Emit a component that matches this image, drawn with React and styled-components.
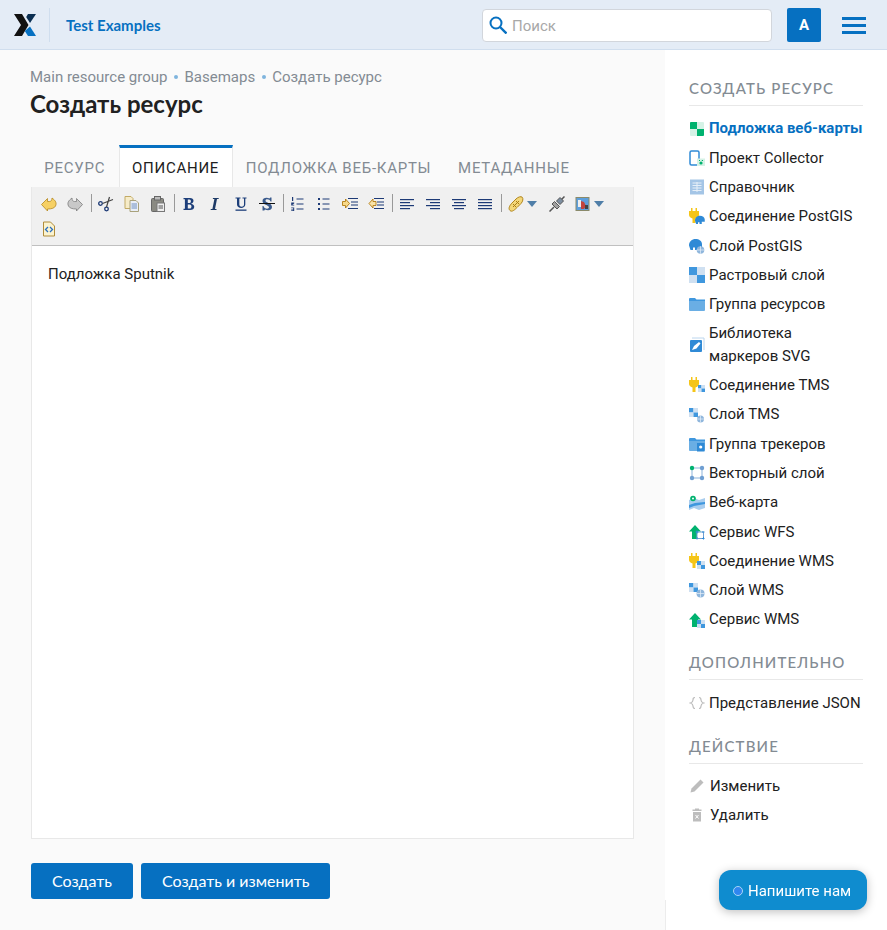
import React from "react";
import styled, { createGlobalStyle } from "styled-components";

const GlobalStyle = createGlobalStyle`
  html, body {
    margin: 0;
    padding: 0;
    background: #fff;
    font-family: Roboto, "Liberation Sans", sans-serif;
    color: #212121;
  }
  * { box-sizing: border-box; }
`;

const Page = styled.div`
  width: 887px;
  height: 930px;
  overflow: hidden;
  display: flex;
  flex-direction: column;
`;

const Header = styled.header`
  height: 50px;
  flex: none;
  display: flex;
  align-items: center;
  background: #e4ecf6;
  border-bottom: 1px solid #d0deee;
  padding: 1px 21px 0 14px;
`;

const LogoBox = styled.div`
  display: flex;
  align-items: center;
  height: 34px;
  padding-right: 13px;
  border-right: 1px solid #d0deee;
`;

const SiteName = styled.div`
  margin-left: 16px;
  font-family: Lato, Roboto, sans-serif;
  font-weight: 700;
  font-size: 15px;
  color: #0670c1;
`;

const Search = styled.div`
  margin-left: auto;
  width: 290px;
  height: 33px;
  display: flex;
  align-items: center;
  gap: 5px;
  padding: 0 6px;
  background: #fff;
  border: 1px solid #d2d6dc;
  border-radius: 4px;
  font-size: 15px;
  color: #a8a8a8;
`;

const SearchText = styled.span`
  padding-top: 2px;
`;

const Avatar = styled.div`
  margin-left: 15px;
  width: 34px;
  height: 34px;
  display: flex;
  align-items: center;
  justify-content: center;
  background: #0670c1;
  border-radius: 2px;
  color: #fff;
  font-weight: 700;
  font-size: 15px;
`;

const Burger = styled.div`
  margin-left: 21px;
  width: 24px;
  display: flex;
  flex-direction: column;
  gap: 4px;

  span {
    display: block;
    height: 3px;
    background: #0670c1;
  }
`;

const Body = styled.div`
  flex: 1;
  min-height: 0;
  display: flex;
`;

const Main = styled.main`
  width: 665px;
  flex: none;
  background: #fafafa;
  padding: 18px 31px 0 30px;
`;

const Crumbs = styled.div`
  display: flex;
  align-items: center;
  height: 18px;
  font-size: 15px;
  color: #838b93;
`;

const Dot = styled.span`
  width: 4px;
  height: 4px;
  margin: 0 6.5px;
  border-radius: 50%;
  background: #7fb4dd;
`;

const Title = styled.h1`
  margin: 3px 0 0;
  font-family: Lato, Roboto, sans-serif;
  font-weight: 700;
  font-size: 24px;
  line-height: 29px;
  color: #212121;
`;

const Tabs = styled.div`
  display: flex;
  margin: 27px 0 0 1px;
  height: 42px;
`;

const Tab = styled.div`
  display: flex;
  align-items: center;
  padding: 0 12.35px;
  font-size: 15px;
  letter-spacing: 0.75px;
  text-transform: uppercase;
  color: ${(p) => (p.$active ? "#212121" : "#838b93")};
  background: ${(p) => (p.$active ? "#fff" : "transparent")};
  border-top: ${(p) => (p.$active ? "3px solid #0670c1" : "3px solid transparent")};
  border-left: 1px solid ${(p) => (p.$active ? "#e8e8e8" : "transparent")};
  border-right: 1px solid ${(p) => (p.$active ? "#e8e8e8" : "transparent")};
`;

const Editor = styled.div`
  margin-left: 1px;
  height: 652px;
  background: #fff;
  border: 1px solid #e8e8e8;
  border-top: none;
  display: flex;
  flex-direction: column;
`;

const Toolbar = styled.div`
  height: 59px;
  flex: none;
  display: flex;
  flex-wrap: wrap;
  align-content: flex-start;
  padding: 4px 0 0 4px;
  background: #f0f0f0;
  border-bottom: 1px solid #c0c0c0;
`;

const Tool = styled.span`
  width: ${(p) => (p.$caret ? 41 : 26)}px;
  height: 25px;
  padding-left: 5px;
  display: flex;
  align-items: center;
`;

const Sep = styled.span`
  width: 1px;
  height: 18px;
  margin: 3px 1px 3px 3px;
  background: #999;
`;

const EditorText = styled.div`
  padding: 18px 16px;
  font-size: 15px;
  line-height: 20px;
`;

const Actions = styled.div`
  margin: 24px 0 0 1px;
  display: flex;
  gap: 8px;
`;

const Button = styled.button`
  height: 36px;
  padding: 0 21px 2px;
  border: none;
  border-radius: 3px;
  background: #0670c1;
  color: #fff;
  font-family: Lato, Roboto, sans-serif;
  font-size: 16px;
`;

const Side = styled.aside`
  position: relative;
  flex: 1;
  padding: 29px 24px 0;

  &::after {
    content: "";
    position: absolute;
    left: 0;
    top: 850px;
    bottom: 0;
    width: 1px;
    background: #ececec;
  }
`;

const SideTitle = styled.h3`
  margin: ${(p) => p.$top || 0}px 0 8px;
  padding-bottom: 8px;
  border-bottom: 1px solid #e8e8e8;
  font-family: Lato, Roboto, sans-serif;
  font-weight: 500;
  font-size: 15px;
  line-height: 18px;
  letter-spacing: 1.15px;
  text-transform: uppercase;
  color: #838b93;
`;

const SideItem = styled.div`
  display: flex;
  align-items: center;
  gap: ${(p) => (p.$wide ? 5 : 4)}px;
  padding: 3.4px 0;
  font-size: 15px;
  line-height: 22.5px;
  font-weight: ${(p) => (p.$active ? 700 : 400)};
  color: ${(p) => (p.$active ? "#0670c1" : "#212121")};

  svg {
    flex: none;
  }
`;

const ChatButton = styled.div`
  position: fixed;
  left: 719px;
  top: 870px;
  width: 148px;
  height: 40px;
  display: flex;
  align-items: center;
  gap: 5px;
  padding: 1px 0 0 14px;
  background: #0f8ccf;
  border-radius: 12px;
  box-shadow: 0 2px 10px rgba(0, 0, 0, 0.25);
  color: #fff;
  font-size: 15px;
`;

const ChatDot = styled.span`
  width: 10px;
  height: 10px;
  border-radius: 50%;
  background: #2f86f0;
  border: 1px solid #a9d6f5;
`;

const Logo = () => (
  <svg width="22" height="22" viewBox="0 0 22 22">
    <path d="M0 0h8l6.500 11L8 22H0l7-11z" fill="#111" />
    <path d="M14 0h8l-6 9-3.800-6z" fill="#0b2f52" />
    <path d="M16 12.500L22 22h-8l-3.200-5z" fill="#0670c1" />
  </svg>
);

const SearchIcon = () => (
  <svg width="18" height="18" viewBox="0 0 18 18" fill="none" stroke="#0670c1" strokeWidth="2">
    <circle cx="7" cy="7" r="5.500" />
    <path d="M11 11l6.500 6.500" strokeWidth="2.400" />
  </svg>
);

const I = ({ children }) => (
  <svg width="16" height="16" viewBox="0 0 16 16">
    {children}
  </svg>
);

const navy = "#1d3a76";

const Lines = ({ rows }) => (
  <I>
    {rows.map(([a, b], i) => (
      <rect key={i} x={a} y={3 + i * 3} width={b} height="1.200" fill={navy} />
    ))}
  </I>
);

const tools = {
  undo: (
    <I>
      <path d="M.5 8.500l6-6v3h2c1.500 0 2.500-1.200 2.500-3.500 3.500 2.500 5 5 3.500 8-1 2-3.500 3-8 3V15z" fill="#f6d064" stroke="#b5881e" strokeWidth="0.800" />
    </I>
  ),
  redo: (
    <I>
      <path d="M15.500 8.500l-6-6v3h-2C6 5.500 5 4.300 5 2 1.500 4.500 0 7 1.500 10c1 2 3.500 3 8 3V15z" fill="#c8c8c8" stroke="#7c7c7c" strokeWidth="0.800" />
    </I>
  ),
  cut: (
    <I>
      <g fill="none" stroke={navy} strokeWidth="1.300">
        <circle cx="2.500" cy="7.500" r="1.800" />
        <circle cx="8.500" cy="13" r="1.800" />
      </g>
      <path d="M4.500 7.500L15 3.500M8.500 11L11.500 1" stroke="#444" strokeWidth="1.200" />
    </I>
  ),
  copy: (
    <I>
      <path d="M1 .5h6l2 2v10H1z" fill="#f6ecc9" stroke="#c2aa66" />
      <path d="M6 4.500h6l2.500 2.500v8.500H6z" fill="#e9eef7" stroke="#a9a27c" />
      <path d="M7.500 8h5.500M7.500 10h5.500M7.500 12h5.500" stroke="#6f8fc0" />
    </I>
  ),
  paste: (
    <I>
      <rect x="1.500" y="2.500" width="12" height="13" rx="1" fill="#8a8a82" stroke="#666" />
      <rect x="4.500" y=".5" width="6" height="3.500" fill="#bbb" stroke="#666" />
      <rect x="7" y="7" width="7.500" height="8.500" fill="#eee" stroke="#777" />
      <path d="M8.500 10h4.500M8.500 12h4.500" stroke="#555" />
    </I>
  ),
  b: (
    <I>
      <path d="M2.500 2h6.500c4.500 0 4.500 5 1 5.700 4.500.6 4.500 6.300-1 6.300H2.500v-1.200h1.400V3.200H2.500zM6.800 3.400v3.700h1.700c1.900 0 1.900-3.700 0-3.700zM6.800 8.400v4.200h1.900c2.400 0 2.400-4.200 0-4.200z" fill="#1d3f7a" />
    </I>
  ),
  i: (
    <I>
      <path d="M6 2h5.800l-.2 1.100h-1.600L8 12.900h1.600l-.2 1.100H3.600l.2-1.100h1.600L7.400 3.100H5.800z" fill="#1d3a66" />
    </I>
  ),
  u: (
    <I>
      <path d="M2.500 1.500H7.500v1.100H6.300V8.500c0 3 4.700 3 4.700 0V2.600H9.500V1.500H13.500v1.100h-1.200V8.500c0 4.600-8.300 4.600-8.300 0V2.600H2.500z" fill="#1d3f7a" />
      <rect x="2.500" y="13.500" width="11" height="1.300" fill="#1d3f7a" />
    </I>
  ),
  s: (
    <I>
      <path d="M12.500 1.500v4h-1c-.5-2.500-5-3-5-.8 0 2.300 6.500 2 6.500 6.300 0 3.500-4.500 4-7 2.500l-.7 1H3.500v-4.500h1c.5 3 5.500 3.500 5.500 1.300 0-2.300-6.500-2.300-6.500-6.300C3.500 1.500 8 1 10.500 2.500l.7-1z" fill="#3a5a8c" />
      <rect x="0" y="7" width="16" height="1" fill="#111" />
    </I>
  ),
  ol: (
    <I>
      <path d="M6.500 3h7M6.500 8h7M6.500 13h7" stroke={navy} strokeWidth="1.200" />
      <path d="M2 1h1.200v4H2zM1.200 6.500h3v1l-2 1.200h2v.8h-3zM1.200 11.500h3V15h-3v-.8h2v-.6h-2v-.5h2v-.8h-2z" fill={navy} />
    </I>
  ),
  ul: (
    <I>
      <path d="M6.500 3h7M6.500 8h7M6.500 13h7" stroke={navy} strokeWidth="1.200" />
      <path d="M2 2h2v2H2zM2 7h2v2H2zM2 12h2v2H2z" fill={navy} />
    </I>
  ),
  indent: (
    <I>
      <path d="M6 2.500h10M9 6h7M9 9h7M6 12.500h10" stroke={navy} strokeWidth="1.100" />
      <path d="M.5 5.500h3V3l4 4.500-4 4.500V9.500h-3z" fill="#f7d98a" stroke="#b37a10" strokeWidth="0.900" />
    </I>
  ),
  outdent: (
    <I>
      <path d="M6 2.500h10M9 6h7M9 9h7M6 12.500h10" stroke={navy} strokeWidth="1.100" />
      <path d="M8 5.500H5V3L1 7.500 5 12V9.500h3z" fill="#f7e2a8" stroke="#b37a10" strokeWidth="0.900" />
    </I>
  ),
  left: <Lines rows={[[1, 14], [1, 10], [1, 14], [1, 10]]} />,
  right: <Lines rows={[[1, 14], [5, 10], [1, 14], [5, 10]]} />,
  center: <Lines rows={[[1, 14], [3, 10], [1, 14], [3, 10]]} />,
  justify: <Lines rows={[[1, 14], [1, 14], [1, 14], [1, 14]]} />,
  link: (
    <I>
      <path d="M2 14.500c-2.200-2 0-5.500 2-7.500l4-4c2-2 5-3 6.200-1.800 1.200 1.300.8 4.300-1.200 6.300l-4 4c-2 2-5 5-7 3z" fill="#f3d77a" stroke="#b0851c" />
      <path d="M5 11l6-6M8 5l3 3M5 8l3 3" stroke="#a87c14" />
    </I>
  ),
  unlink: (
    <I>
      <path d="M.5 15.500l4.500-4.500M15.500.5l-3 3" stroke="#555" strokeWidth="1.500" />
      <path d="M3 8l5 5 2.500-2.500-5-5z" fill="#a0a0a0" stroke="#555" />
      <path d="M7.500 5l3.500 3.500 3.500-3.500L11 1.500z" fill="#7c8ea0" stroke="#555" />
    </I>
  ),
  image: (
    <I>
      <rect x="1" y="1.500" width="13" height="13" fill="#5d9fdc" stroke="#8a8a6a" />
      <path d="M3 4h3v7H3z" fill="#eee" />
      <path d="M6 5l3 1 2 4-2 3H6z" fill="#c2443c" />
      <path d="M10 9h3v4h-3z" fill="#444" />
    </I>
  ),
  source: (
    <I>
      <path d="M2.500 1h7l4 4v10h-11z" fill="#fbf3cf" stroke="#b08c3a" />
      <path d="M7 6L4.500 8.500 7 11M9 6l2.500 2.500L9 11" fill="none" stroke="#2a6fc0" strokeWidth="1.300" />
    </I>
  ),
};

const Caret = () => (
  <svg width="10" height="6" viewBox="0 0 10 6" style={{ marginLeft: 3 }}>
    <path d="M0 0h10L5 6z" fill="#4f7ea8" />
  </svg>
);

const blue = "#3f97de";
const pale = "#cfe0f1";
const green = "#00b26f";
const yellow = "#f5c518";

const Checker = ({ x = 0, y = 0, s = 4, a = blue, b = pale }) => (
  <g>
    <rect x={x} y={y} width={s} height={s} fill={a} />
    <rect x={x + s} y={y} width={s} height={s} fill={b} />
    <rect x={x} y={y + s} width={s} height={s} fill={b} />
    <rect x={x + s} y={y + s} width={s} height={s} fill={a} />
  </g>
);

const Plug = () => (
  <path d="M2 0h1.500v3h3V0H8v3h2v4c0 2-2 3-3.500 3.500V15h-3v-4.500C2 10 0 9 0 7V3h2z" fill={yellow} />
);

const Globe = ({ x = 11, y = 12, r = 3.500 }) => (
  <g>
    <circle cx={x} cy={y} r={r} fill="#8fb6dc" />
    <path d={`M${x - r} ${y}h${2 * r}M${x} ${y - r}v${2 * r}`} stroke="#e6eff8" strokeWidth="0.700" />
  </g>
);

const Elephant = () => (
  <path d="M0 7.500C0 3.500 3 1 6.500 1S13 3 13 6v3H9v3H6V9.500H4V12H1.500z" fill="#2f8ad6" />
);

const ArrowUp = () => <path d="M0 7.500L6 1l6 6.500H9V15H3V7.500z" fill={green} />;

const sideIcons = {
  basemap: (
    <I>
      <rect x="1" y="1" width="14" height="14" rx="1" fill="#d5f2e6" />
      <path d="M1 2a1 1 0 0 1 1-1h6v7H1zM8 8h7v6a1 1 0 0 1-1 1H8z" fill={green} />
    </I>
  ),
  collector: (
    <I>
      <rect x="1" y="1" width="9" height="14" rx="1.500" fill="#fff" stroke="#2f8ad6" strokeWidth="1.500" />
      <rect x="8" y="8.500" width="8" height="7.500" fill="#d5f2e6" />
      <circle cx="12" cy="13" r="1.600" fill={green} />
      <path d="M10 10.500h1M12.800 10.500h1.200" stroke={green} />
    </I>
  ),
  lookup: (
    <I>
      <rect x="1" y="0.500" width="14" height="15" fill="#a4c5e6" />
      <path d="M3.500 4h9M3.500 6.500h9M3.500 9h9M3.500 11.500h9M8 3v10" stroke="#e6eff8" />
    </I>
  ),
  pgConn: (
    <I>
      <Plug />
      <g transform="translate(6 7) scale(0.75)"><Elephant /></g>
    </I>
  ),
  pgLayer: (
    <I>
      <Elephant />
      <Globe x={11.500} y={12} r={3.800} />
    </I>
  ),
  raster: (
    <I>
      <Checker s={8} />
    </I>
  ),
  group: (
    <I>
      <path d="M0 3a1 1 0 0 1 1-1h5l1.500 1.500H16V5H0z" fill="#3f97de" />
      <path d="M0 5h16v9a1 1 0 0 1-1 1H1a1 1 0 0 1-1-1z" fill="#6aaee4" />
    </I>
  ),
  svg: (
    <I>
      <path d="M3 1h12v12" fill="none" stroke="#bcd6ee" />
      <rect x="1" y="3" width="12" height="12" rx="1" fill="#2f8ad6" />
      <path d="M3 13l2-4 5-4 1.500 1.500-4 5z" fill="#fff" />
    </I>
  ),
  tmsConn: (
    <I>
      <Plug />
      <Checker x={9} y={8} s={3.500} />
    </I>
  ),
  tmsLayer: (
    <I>
      <Checker y={1} s={4.500} />
      <Globe x={11.500} y={12} r={3.500} />
    </I>
  ),
  tracker: (
    <I>
      <path d="M0 3a1 1 0 0 1 1-1h5l1.500 1.500H16V5H0z" fill="#3f97de" />
      <path d="M0 5h16v9a1 1 0 0 1-1 1H1a1 1 0 0 1-1-1z" fill="#6aaee4" />
      <rect x="8" y="7" width="7.500" height="8.500" fill="#2f8ad6" />
      <circle cx="11.700" cy="11" r="1.600" fill="#fff" />
    </I>
  ),
  vector: (
    <I>
      <rect x="3" y="3" width="10" height="10" fill="none" stroke="#8fb5dc" />
      <circle cx="3" cy="3" r="2.200" fill={green} />
      <circle cx="13" cy="3" r="2.200" fill="#6f9fd2" />
      <circle cx="3" cy="13" r="2.200" fill="#6f9fd2" />
      <circle cx="13" cy="13" r="2.200" fill="#6f9fd2" />
    </I>
  ),
  webmap: (
    <I>
      <path d="M0 5l5-2 5 2 6-2v10l-6 2-5-2-5 2z" fill="#a9cdee" />
      <path d="M0 10l6-2 10-1v2L5 11l-5 2z" fill="#3f97de" />
      <circle cx="4" cy="3.500" r="2.800" fill={green} />
      <circle cx="4" cy="3.500" r="1" fill="#fff" />
    </I>
  ),
  wfs: (
    <I>
      <ArrowUp />
      <rect x="8" y="8" width="6.500" height="6.500" fill="#fff" stroke="#6f9fd2" />
      <path d="M6.500 8h3M8 6.500v3M13 8h2.500M8 13v2.500M13 14.500h2.500M14.500 13v2.500" stroke="#2f8ad6" />
    </I>
  ),
  wmsConn: (
    <I>
      <Plug />
      <Checker x={8} y={8} s={4} />
    </I>
  ),
  wmsLayer: (
    <I>
      <Checker y={1} s={4.500} />
      <Globe x={11.500} y={11.500} r={4} />
    </I>
  ),
  wms: (
    <I>
      <ArrowUp />
      <Checker x={8} y={8} s={4} />
    </I>
  ),
  json: (
    <I>
      <path d="M6 2.500c-2 0-2 1-2 2.500 0 2-1 2.500-2.500 3C3 8.500 4 9 4 11c0 1.500 0 2.500 2 2.500M10 2.500c2 0 2 1 2 2.500 0 2 1 2.500 2.500 3-1.500.5-2.500 1-2.500 3 0 1.500 0 2.500-2 2.500" fill="none" stroke="#bdbdbd" strokeWidth="1.200" />
    </I>
  ),
  edit: (
    <I>
      <path d="M1.500 14.500l1-4L11.500 1.500 14.500 4.500l-9 9z" fill="#bdbdbd" />
    </I>
  ),
  remove: (
    <I>
      <path d="M3.500 2.500h2.500V1.500h4v1h2.500V4h-9z" fill="#bdbdbd" />
      <path d="M4 5h8v9.500H4z" fill="#bdbdbd" />
      <path d="M6.500 8l3 3.500M9.500 8l-3 3.500" stroke="#fff" />
    </I>
  ),
};

const createItems = [
  ["basemap", "Подложка веб-карты", true],
  ["collector", "Проект Collector"],
  ["lookup", "Справочник"],
  ["pgConn", "Соединение PostGIS"],
  ["pgLayer", "Слой PostGIS"],
  ["raster", "Растровый слой"],
  ["group", "Группа ресурсов"],
  ["svg", "Библиотека маркеров SVG"],
  ["tmsConn", "Соединение TMS"],
  ["tmsLayer", "Слой TMS"],
  ["tracker", "Группа трекеров"],
  ["vector", "Векторный слой"],
  ["webmap", "Веб-карта"],
  ["wfs", "Сервис WFS"],
  ["wmsConn", "Соединение WMS"],
  ["wmsLayer", "Слой WMS"],
  ["wms", "Сервис WMS"],
];

const toolbar = [
  "undo", "redo", "|", "cut", "copy", "paste", "|", "b", "i", "u", "s", "|",
  "ol", "ul", "indent", "outdent", "|", "left", "right", "center", "justify", "|",
  "link+", "unlink", "image+", "source",
];

const tabs = ["Ресурс", "Описание", "Подложка веб-карты", "Метаданные"];

export default function App() {
  return (
    <Page>
      <GlobalStyle />
      <Header>
        <LogoBox>
          <Logo />
        </LogoBox>
        <SiteName>Test Examples</SiteName>
        <Search>
          <SearchIcon />
          <SearchText>Поиск</SearchText>
        </Search>
        <Avatar>A</Avatar>
        <Burger>
          <span />
          <span />
          <span />
        </Burger>
      </Header>
      <Body>
        <Main>
          <Crumbs>
            Main resource group
            <Dot />
            Basemaps
            <Dot />
            Создать ресурс
          </Crumbs>
          <Title>Создать ресурс</Title>
          <Tabs>
            {tabs.map((t) => (
              <Tab key={t} $active={t === "Описание"}>
                {t}
              </Tab>
            ))}
          </Tabs>
          <Editor>
            <Toolbar>
              {toolbar.map((t, i) => {
                if (t === "|") return <Sep key={i} />;
                const caret = t.endsWith("+");
                const name = caret ? t.slice(0, -1) : t;
                return (
                  <Tool key={i} $caret={caret}>
                    {tools[name]}
                    {caret && <Caret />}
                  </Tool>
                );
              })}
            </Toolbar>
            <EditorText>Подложка Sputnik</EditorText>
          </Editor>
          <Actions>
            <Button>Создать</Button>
            <Button>Создать и изменить</Button>
          </Actions>
        </Main>
        <Side>
          <SideTitle>Создать ресурс</SideTitle>
          {createItems.map(([icon, label, active]) => (
            <SideItem key={icon} $active={active}>
              {sideIcons[icon]}
              <span>{label}</span>
            </SideItem>
          ))}
          <SideTitle $top={19}>Дополнительно</SideTitle>
          <SideItem>
            {sideIcons.json}
            <span>Представление JSON</span>
          </SideItem>
          <SideTitle $top={19}>Действие</SideTitle>
          <SideItem $wide>
            {sideIcons.edit}
            <span>Изменить</span>
          </SideItem>
          <SideItem $wide>
            {sideIcons.remove}
            <span>Удалить</span>
          </SideItem>
        </Side>
      </Body>
      <ChatButton>
        <ChatDot />
        Напишите нам
      </ChatButton>
    </Page>
  );
}
